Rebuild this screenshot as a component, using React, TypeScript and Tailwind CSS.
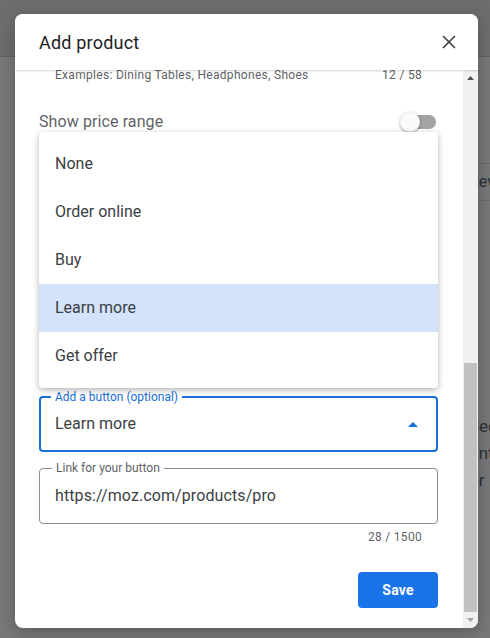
import React from 'react';
import { X } from 'lucide-react';

const options = ['None', 'Order online', 'Buy', 'Learn more', 'Get offer'];

function Toggle() {
  return (
    <div className="relative flex items-center w-[38px] h-5">
      <div className="ml-[2px] w-[34px] h-[14px] rounded-full bg-[#a3a3a3]" />
      <div className="absolute left-0 top-0 w-5 h-5 rounded-full bg-[#fafafa] shadow-[0_1px_3px_rgba(0,0,0,0.4)]" />
    </div>
  );
}

function Background() {
  return (
    <div className="flex flex-col w-full h-full text-[#2e2f31]">
      <div className="h-[57px] bg-[#6c6d6f] border-b border-[#5f6062] shrink-0" />
      <div className="flex flex-1">
        <div className="flex-1" />
        <div className="w-[21px] flex flex-col overflow-hidden">
          <div className="mt-[106px] border-t border-[#6a6b6d]" />
          <div className="mt-[6px] h-[24px] flex items-center text-[16px] whitespace-nowrap">Rev</div>
          <div className="mt-[6px] border-t border-[#6a6b6d]" />
          <div className="mt-[212px] flex flex-col text-[17px] leading-[27px] whitespace-nowrap">
            <span>Sec</span>
            <span>Ent</span>
            <span>or</span>
          </div>
        </div>
      </div>
    </div>
  );
}

export default function App() {
  return (
    <div
      className="relative w-[490px] h-[638px] overflow-hidden bg-[#77787a]"
      style={{ fontFamily: 'Roboto, "Liberation Sans", sans-serif' }}
    >
      <Background />

      <div className="absolute left-[15px] top-[14px] w-[463px] h-[614px] bg-white rounded-lg overflow-hidden flex flex-col shadow-[0_4px_16px_rgba(0,0,0,0.25)]">
        <div className="relative z-10 h-14 shrink-0 flex items-center justify-between pl-6 pr-[18px] bg-white shadow-[0_1px_2px_rgba(0,0,0,0.18)]">
          <h2 className="text-[18px] text-[#202124] tracking-[0.2px]">Add product</h2>
          <X className="w-[22px] h-[22px] text-[#3c4043]" strokeWidth={1.8} />
        </div>

        <div className="flex flex-1 min-h-0">
          <div className="relative flex-1 flex flex-col px-6 pr-[25px]">
            <div className="-mt-[3px] h-4 flex items-center justify-between px-4 text-xs tracking-[0.3px] text-[#5f6368]">
              <span>Examples: Dining Tables, Headphones, Shoes</span>
              <span>12 / 58</span>
            </div>

            <div className="mt-[27px] h-6 flex items-center justify-between">
              <span className="text-[16px] tracking-[0.1px] text-[#5f6368]">Show price range</span>
              <Toggle />
            </div>

            <div className="relative mt-[262px] h-14 rounded border-2 border-[#1a6fd6] flex items-center justify-between pl-[14px] pr-[18px]">
              <span className="absolute -top-[9px] left-[10px] px-1 bg-white text-xs leading-4 text-[#1a6fd6]">
                Add a button (optional)
              </span>
              <span className="text-[16px] text-[#3c4043]">Learn more</span>
              <svg width="10" height="5" viewBox="0 0 10 5" className="text-[#1a6fd6]">
                <path d="M0 5 L5 0 L10 5 Z" fill="currentColor" />
              </svg>
            </div>

            <div className="relative mt-[16px] h-14 rounded border border-[#8b8e92] flex items-center pl-[15px]">
              <span className="absolute -top-[9px] left-3 px-1 bg-white text-xs leading-4 text-[#5f6368]">
                Link for your button
              </span>
              <span className="text-[16px] tracking-[0.1px] text-[#3c4043]">https://moz.com/products/pro</span>
            </div>

            <div className="mt-[5px] h-4 flex justify-end pr-4 text-xs tracking-[0.3px] text-[#5f6368]">28 / 1500</div>

            <div className="mt-[27px] flex justify-end">
              <button
                type="button"
                className="w-20 h-9 rounded bg-[#1a73e8] text-white text-[14px] font-bold tracking-[0.2px]"
              >
                Save
              </button>
            </div>

            <div className="absolute left-6 right-[25px] top-[62px] h-[256px] bg-white rounded shadow-[0_2px_6px_rgba(0,0,0,0.3)] py-2 flex flex-col z-20">
              {options.map((o) => (
                <div
                  key={o}
                  className={
                    o === 'Learn more'
                      ? 'h-12 flex items-center px-4 text-[16px] text-[#3c4043] bg-[#d3e3fb]'
                      : 'h-12 flex items-center px-4 text-[16px] text-[#3c4043]'
                  }
                >
                  {o}
                </div>
              ))}
            </div>
          </div>

          <div className="w-[15px] shrink-0 bg-[#f1f1f1] flex flex-col items-center">
            <div className="h-[17px] flex items-center justify-center">
              <svg width="7" height="4" viewBox="0 0 7 4">
                <path d="M0 4 L3.5 0 L7 4 Z" fill="#505050" />
              </svg>
            </div>
            <div className="flex-1 w-full flex flex-col">
              <div className="flex-1 min-h-0 basis-[276px]" />
              <div className="mx-[1px] h-[249px] bg-[#c1c1c1] shrink-0" />
            </div>
            <div className="h-[17px] flex items-center justify-center">
              <svg width="7" height="4" viewBox="0 0 7 4">
                <path d="M0 0 L3.5 4 L7 0 Z" fill="#a3a3a3" />
              </svg>
            </div>
          </div>
        </div>
      </div>
    </div>
  );
}
